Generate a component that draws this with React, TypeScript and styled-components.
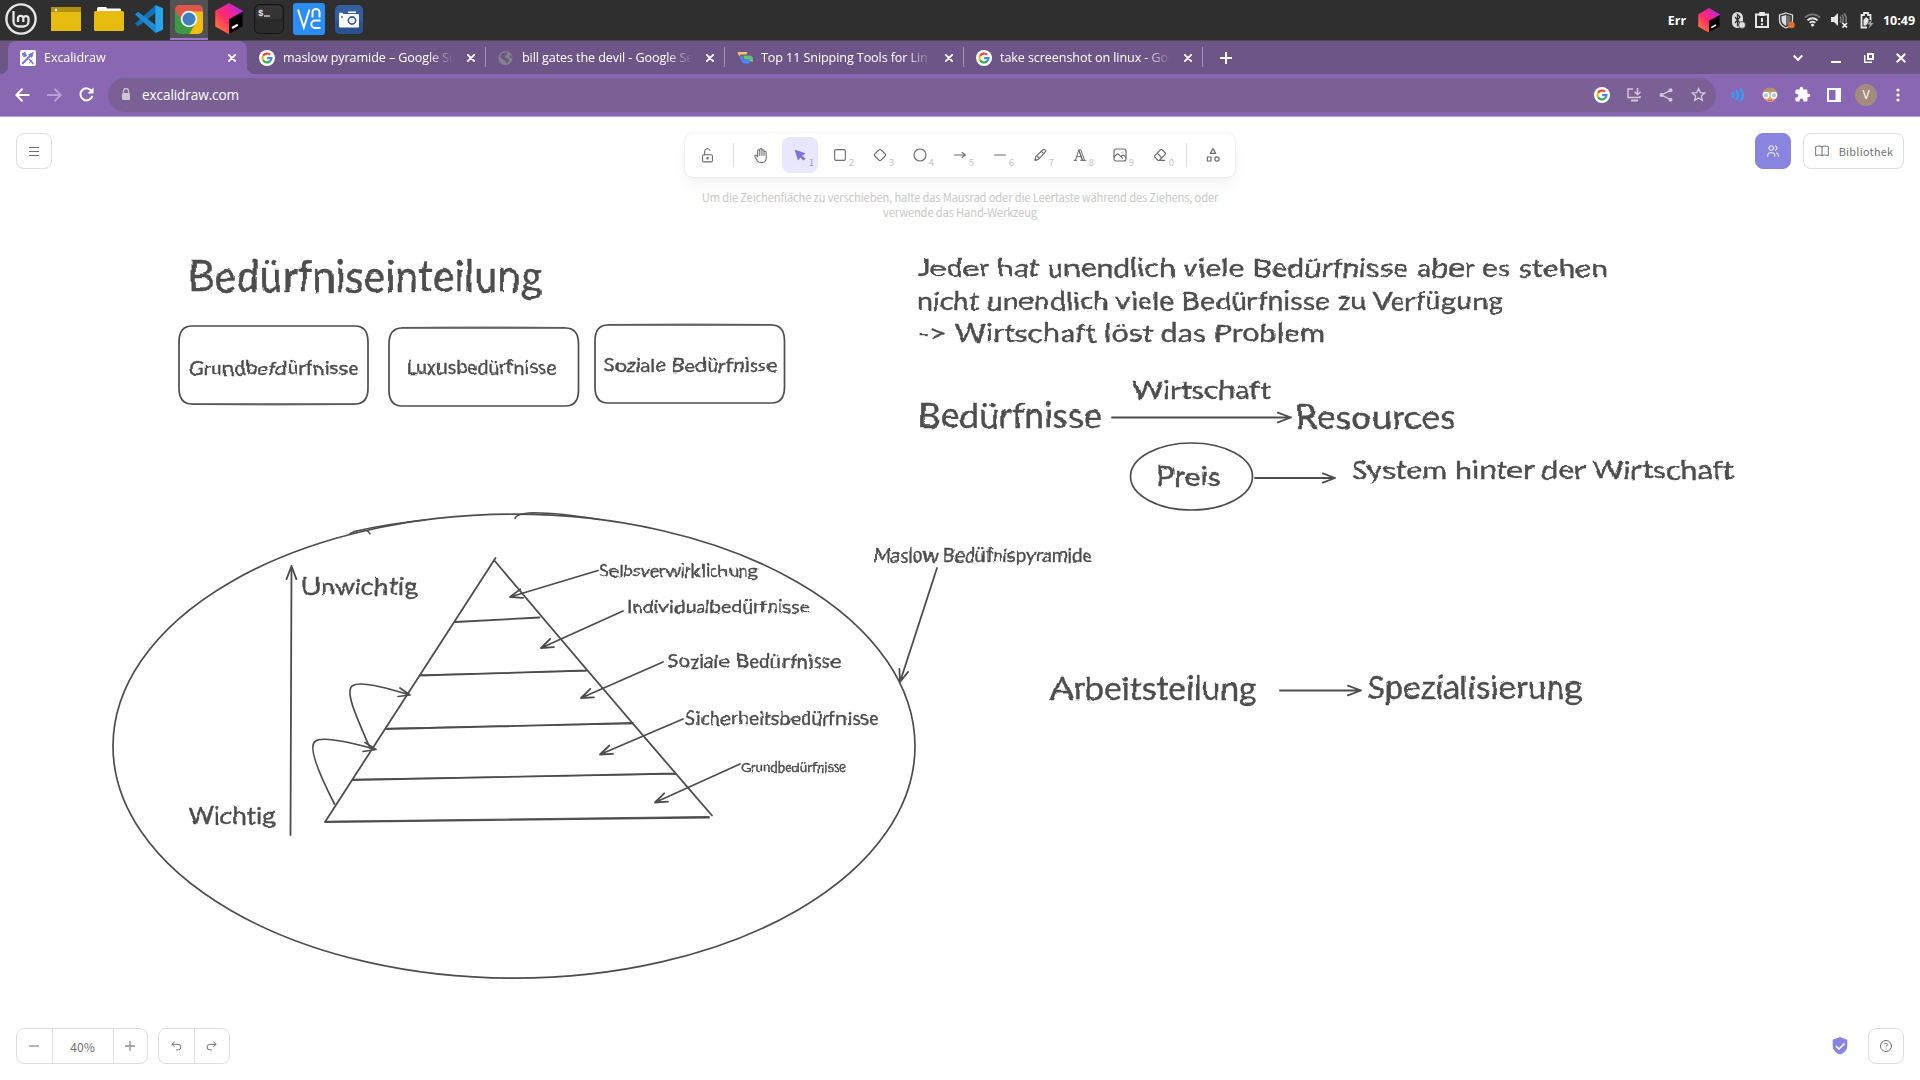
import React from 'react';
import styled, { createGlobalStyle, css } from 'styled-components';

const GlobalStyle = createGlobalStyle`
  * { box-sizing: border-box; }
  body { margin: 0; background: #fff; }
`;

const chromeFont = `"Open Sans", "Noto Sans", sans-serif`;
const uiFont = `"Noto Sans CJK SC", "Open Sans", sans-serif`;

const Screen = styled.div`
  width: 1920px;
  height: 1080px;
  display: flex;
  flex-direction: column;
  overflow: hidden;
  font-family: ${uiFont};
`;

/* ---------- desktop panel ---------- */
const Panel = styled.header`
  height: 41px;
  flex: none;
  display: flex;
  justify-content: space-between;
  background: #2f2f2f;
  border-bottom: 1px solid #4b4a4c;
`;
const Launchers = styled.div`
  display: flex;
`;
const Launcher = styled.div<{ $w?: number }>`
  width: ${(p) => p.$w ?? 40}px;
  display: flex;
  align-items: center;
  justify-content: center;
  padding-bottom: 2px;
`;
const ActiveLauncher = styled(Launcher)`
  width: 38px;
  margin: 0 1px;
  background: #525252;
  border-bottom: 2px solid #9a76cf;
  padding-bottom: 0;
`;
const Tray = styled.div`
  display: flex;
  align-items: center;
  padding-right: 3px;
  color: #fff;
  font: 700 12.5px ${chromeFont};
`;
const TrayItem = styled.div<{ $w: number }>`
  width: ${(p) => p.$w}px;
  height: 40px;
  display: flex;
  align-items: center;
  justify-content: center;
  white-space: nowrap;
`;

/* ---------- browser ---------- */
const TabStrip = styled.div`
  height: 33px;
  flex: none;
  display: flex;
  justify-content: space-between;
  background: #6d5687;
  padding-left: 8px;
`;
const Tabs = styled.div`
  display: flex;
  align-items: center;
`;
const Tab = styled.div<{ $active?: boolean; $divider?: boolean }>`
  position: relative;
  width: 239px;
  height: 33px;
  display: flex;
  align-items: center;
  gap: 8px;
  padding: 0 11px 0 12px;
  color: #fff;
  font: 400 12.6px ${chromeFont};
  ${(p) =>
    p.$active &&
    css`
      background: #8a67b3;
      border-radius: 8px 8px 0 0;
      &::before, &::after {
        content: '';
        position: absolute;
        bottom: 0;
        width: 8px;
        height: 8px;
      }
      &::before { left: -8px; background: radial-gradient(circle at 0 0, #6d5687 8px, #8a67b3 8.5px); }
      &::after { right: -8px; background: radial-gradient(circle at 100% 0, #6d5687 8px, #8a67b3 8.5px); }
    `}
  ${(p) =>
    p.$divider &&
    css`
      &::after {
        content: '';
        position: absolute;
        right: 0;
        top: 6px;
        width: 1px;
        height: 20px;
        background: #a392b4;
      }
    `}
`;
const TabTitle = styled.span`
  flex: 1;
  overflow: hidden;
  white-space: nowrap;
  letter-spacing: -0.1px;
  mask-image: linear-gradient(90deg, #000 82%, transparent 97%);
`;
const Svg = styled.svg`
  display: block;
  flex: none;
`;
const NewTab = styled.div`
  width: 46px;
  display: flex;
  justify-content: center;
`;
const WindowButtons = styled.div`
  display: flex;
  align-items: center;
  padding-right: 1px;
`;
const Slot = styled.div<{ $w?: number }>`
  width: ${(p) => p.$w ?? 32}px;
  display: flex;
  align-items: center;
  justify-content: center;
`;
const AddressRow = styled.div`
  height: 43px;
  flex: none;
  display: flex;
  align-items: center;
  padding: 0 6px 1px;
  background: #8a67b3;
  border-bottom: 1px solid #b7a1d0;
`;
const AddressBar = styled.div`
  width: 1608px;
  height: 34px;
  margin: 0 6px;
  border-radius: 17px;
  background: #7b6096;
  display: flex;
  align-items: center;
  padding: 0 2px 0 13px;
`;
const Url = styled.span`
  flex: 1;
  margin-left: 11px;
  color: #fff;
  font: 400 13.6px ${chromeFont};
  letter-spacing: -0.1px;
`;
const Profile = styled.div`
  width: 22px;
  height: 22px;
  border-radius: 50%;
  background: #a58a7f;
  color: #fff;
  display: flex;
  align-items: center;
  justify-content: center;
  font: 400 12px ${chromeFont};
`;

/* ---------- whiteboard ---------- */
const Board = styled.main`
  flex: 1;
  position: relative;
  display: flex;
  flex-direction: column;
  justify-content: space-between;
  padding: 16px;
  background: #fff;
`;
const Canvas = styled.svg`
  position: absolute;
  left: 0;
  top: 0;
`;
const Bar = styled.div`
  position: relative;
  display: flex;
  justify-content: space-between;
  align-items: flex-start;
`;
const BarSide = styled.div<{ $end?: boolean }>`
  width: 420px;
  display: flex;
  align-items: center;
  gap: ${(p) => (p.$end ? 12 : 10)}px;
  justify-content: ${(p) => (p.$end ? 'flex-end' : 'flex-start')};
`;
const IconButton = styled.button<{ $primary?: boolean }>`
  width: 36px;
  height: 36px;
  padding: 0;
  display: flex;
  align-items: center;
  justify-content: center;
  border-radius: 8px;
  border: 1px solid ${(p) => (p.$primary ? '#8884e0' : '#dedede')};
  background: ${(p) => (p.$primary ? '#8884e0' : '#fff')};
  color: ${(p) => (p.$primary ? '#fff' : '#707070')};
`;
const LibraryButton = styled(IconButton)`
  width: 101px;
  gap: 9px;
  font: 400 10.8px ${uiFont};
  letter-spacing: 0.3px;
`;
const Center = styled.div`
  display: flex;
  flex-direction: column;
  align-items: center;
`;
const Tools = styled.div`
  height: 44px;
  display: flex;
  align-items: center;
  gap: 4px;
  padding: 4px;
  border-radius: 8px;
  background: #fff;
  box-shadow: 0 0 2px rgba(0, 0, 0, 0.14), 0 7px 14px rgba(0, 0, 0, 0.05);
`;
const Tool = styled.button<{ $on?: boolean }>`
  position: relative;
  width: 36px;
  height: 36px;
  padding: 0;
  border: 0;
  border-radius: 8px;
  display: flex;
  align-items: center;
  justify-content: center;
  background: ${(p) => (p.$on ? '#e9e7fd' : 'transparent')};
  color: ${(p) => (p.$on ? '#7a74dc' : '#6b6b6b')};
`;
const Key = styled.span<{ $on?: boolean }>`
  position: absolute;
  right: 4px;
  bottom: 4px;
  font: 400 9.5px/13px ${uiFont};
  color: ${(p) => (p.$on ? '#9f9cc4' : '#c4c4c4')};
`;
const ToolDivider = styled.div`
  width: 1px;
  height: 24px;
  margin: 0 4px;
  background: #dcdcdc;
`;
const Hint = styled.p`
  width: 530px;
  margin: 13px 0 0;
  text-align: center;
  font: 400 11.2px/15px ${uiFont};
  letter-spacing: -0.16px;
  color: #c8c8c8;
`;
const Group = styled.div`
  height: 36px;
  display: flex;
  border: 1px solid #dedede;
  border-radius: 8px;
  background: #fff;
  color: #8a8a8a;
`;
const GroupCell = styled.div<{ $w: number }>`
  width: ${(p) => p.$w}px;
  display: flex;
  align-items: center;
  justify-content: center;
  padding-right: 1px;
  font: 400 12px ${uiFont};
  color: #707070;
  & + & { border-left: 1px solid #dedede; }
`;

const INK = '#4d4d4d';
const Note = styled.text`
  font-family: Lato, "Open Sans", sans-serif;
  font-variant-ligatures: none;
  fill: ${INK};
  stroke: ${INK};
  stroke-width: 0.35;
  white-space: pre;
`;
const Stroke = styled.path<{ $w?: number }>`
  fill: none;
  stroke: ${INK};
  stroke-width: ${(p) => p.$w ?? 1.7};
  stroke-linecap: round;
  stroke-linejoin: round;
`;

type IcoProps = { s?: number; w?: number; children: React.ReactNode; box?: number };
const Line = ({ s = 16, w = 1.7, box = 24, children }: IcoProps) => (
  <Svg width={s} height={s} viewBox={`0 0 ${box} ${box}`} fill="none" stroke="currentColor" strokeWidth={w} strokeLinecap="round" strokeLinejoin="round">
    {children}
  </Svg>
);

const GoogleG = () => (
  <Svg width="16" height="16" viewBox="0 0 48 48">
    <circle cx="24" cy="24" r="24" fill="#fff" />
    <g fill="none" strokeWidth="6.5">
      <path d="M33.5 14.5A13.5 13.5 0 0 0 12.3 17.3" stroke="#ea4335" />
      <path d="M12.3 17.3A13.5 13.5 0 0 0 12.3 30.7" stroke="#fbbc05" />
      <path d="M12.3 30.7A13.5 13.5 0 0 0 32.7 34.3" stroke="#34a853" />
      <path d="M32.7 34.3A13.5 13.5 0 0 0 37.4 24.6H24.5" stroke="#4285f4" />
    </g>
  </Svg>
);
const ExcalidrawIcon = () => (
  <Svg width="16" height="16" viewBox="0 0 16 16">
    <rect width="16" height="16" rx="2" fill="#fff" />
    <g stroke="#7974dd" fill="none" strokeLinecap="round" strokeLinejoin="round">
      <path d="M2.8 13.3 10 6" strokeWidth="2" />
      <path d="M9 4.500 13.300 2.500 11.800 7Z" strokeWidth="1" fill="#7974dd" />
      <path d="M2.500 3.500 5 2.500 6.500 6 4 6.500Z" strokeWidth="1" fill="#7974dd" />
      <path d="M9.500 9.500l3.500 4" strokeWidth="1.600" />
      <path d="M9.500 12.500l2.600-2.300" strokeWidth="1" />
    </g>
  </Svg>
);
const GlobeIcon = () => (
  <Svg width="16" height="16" viewBox="0 0 16 16">
    <circle cx="7.400" cy="8" r="7" fill="#84828a" />
    <path d="M4 3.200 8.600 2l.8 2.500-2.800 1.300L7.800 8 10 8.400l1.200 2.600-2.600 2.800-1-2.800L3 8.200 2 6zM11.200 5l2.400 1.200v2.600l-2-1.200z" fill="#6d5687" />
  </Svg>
);
const GeekIcon = () => (
  <Svg width="16" height="16" viewBox="0 0 16 16">
    <path d="M.3 2.500Q1 2 2 2H10.500L9.500 4.500H4.500Q3 4.500 2.500 6.500Z" fill="#fdbc6e" />
    <path d="M2.500 7.500 5.500 5Q5.500 9.500 8 10H13L12 13.500H7.500Q5 13.500 4 10Z" fill="#4f86f7" />
    <path d="M6.500 5.500H12Q16 5.500 16 9V12L12.800 11.500 12.500 9.500H8Q6 8.500 6.500 5.500Z" fill="#5dc27c" />
  </Svg>
);
const CloseIcon = () => (
  <Line s={8} w={2.2} box={10}>
    <path d="M1 1l8 8M9 1L1 9" />
  </Line>
);

const JetBrains = ({ s }: { s: number }) => (
  <Svg width={s} height={s * 1.12} viewBox="0 0 28 32">
    <defs>
      <linearGradient id="jb" x1="0" y1="1" x2="1" y2="0">
        <stop offset="0" stopColor="#ff9a1f" />
        <stop offset=".42" stopColor="#ff2d6c" />
        <stop offset=".65" stopColor="#e8259c" />
        <stop offset="1" stopColor="#9a2dff" />
      </linearGradient>
    </defs>
    <path d="M14 0 28 8v16l-14 8L0 24V8Z" fill="url(#jb)" />
    <path d="M14 16.500 28 9v15l-14 8Z" fill="#000" />
    <path d="M17 25.500l6-3.300" stroke="#fff" strokeWidth="2.200" />
  </Svg>
);

const Launch = () => (
  <Launchers>
    <Launcher $w={42}>
      <Svg width="34" height="34" viewBox="0 0 34 34" fill="none" stroke="#e6e6e6">
        <circle cx="17" cy="17" r="14.600" strokeWidth="2.400" />
        <path d="M9.500 9v10.500a5 5 0 0 0 5 5h5a5 5 0 0 0 5-5V16a2.700 2.700 0 0 0-5.200 0v4m0-4a2.700 2.700 0 0 0-5.300 0v4" strokeWidth="2.300" />
      </Svg>
    </Launcher>
    <Launcher $w={48}>
      <Svg width="30" height="24" viewBox="0 0 30 24">
        <rect width="30" height="24" fill="#e7bc10" />
        <rect width="30" height="5" fill="#b39010" />
        <circle cx="5" cy="3" r="1.200" fill="#fff" />
      </Svg>
    </Launcher>
    <Launcher $w={38}>
      <Svg width="30" height="24" viewBox="0 0 30 24">
        <path d="M3 1.500 4 0h8l1.500 1.500H26a1 1 0 0 1 1 1V6H3Z" fill="#fff" />
        <rect y="4" width="30" height="20" rx="1.500" fill="#e7bc10" />
      </Svg>
    </Launcher>
    <Launcher $w={41}>
      <Svg width="28" height="28" viewBox="0 0 28 28">
        <path d="M20.500 0v8L3 21.500 0 18.800 20 .5Z" fill="#1272b8" />
        <path d="M3 6.800 20.500 20v8L0 9.500Z" fill="#1c8ad6" />
        <path d="M20.300 0 28 3.300v21.400L20.300 28Z" fill="#27a4ef" />
      </Svg>
    </Launcher>
    <ActiveLauncher>
      <Svg width="28" height="29" viewBox="0 0 28 29">
        <clipPath id="cr"><rect width="28" height="29" rx="5" /></clipPath>
        <g clipPath="url(#cr)">
          <rect width="28" height="29" fill="#3f9a47" />
          <path d="M0 0h28v8H14L7 16 0 5Z" fill="#e2554a" />
          <path d="M14 6.500h14V29H14.500L21 17Z" fill="#f2bd13" />
          <circle cx="14" cy="14" r="8.300" fill="#f4f4f4" />
          <circle cx="14" cy="14" r="6.500" fill="#3f7fbd" />
        </g>
      </Svg>
    </ActiveLauncher>
    <Launcher><JetBrains s={28} /></Launcher>
    <Launcher>
      <Svg width="30" height="30" viewBox="0 0 30 30">
        <rect x=".5" y=".5" width="29" height="29" rx="5" fill="#2a2a2a" stroke="#151515" />
        <rect x="2" y="2" width="26" height="13" rx="4" fill="#353535" />
        <text x="4" y="12" fontSize="9" fontWeight="700" fontFamily="Liberation Mono, monospace" fill="#e8e8e8">$</text>
        <path d="M10 12h6" stroke="#e8e8e8" strokeWidth="1.200" />
      </Svg>
    </Launcher>
    <Launcher>
      <Svg width="32" height="32" viewBox="0 0 32 32" fill="none" stroke="#fff" strokeWidth="2">
        <rect width="32" height="32" rx="3" fill="#2a8cf4" stroke="none" />
        <path d="M5 6.500 10.800 24.500 16.500 6.500" />
        <path d="M19.500 14.500V9.500a3.500 3.500 0 0 1 7 0v5" />
        <path d="M27.500 17.500H22a3.700 3.700 0 0 0 0 7.400h5.500" />
      </Svg>
    </Launcher>
    <Launcher>
      <Svg width="28" height="29" viewBox="0 0 28 29">
        <rect width="28" height="29" rx="5" fill="#345f9e" />
        <rect y="15" width="28" height="14" rx="5" fill="#2b528d" />
        <path d="M4 8.500h4M13 7.300h8" stroke="#fff" strokeWidth="1.400" />
        <rect x="4" y="9" width="20" height="13.500" rx="1.200" fill="#fff" />
        <circle cx="17" cy="15.500" r="3.600" fill="none" stroke="#30599a" strokeWidth="1.600" />
        <circle cx="7" cy="12" r=".9" fill="#30599a" />
      </Svg>
    </Launcher>
  </Launchers>
);

const SystemTray = () => (
  <Tray>
    <TrayItem $w={26}>Err</TrayItem>
    <TrayItem $w={38}><JetBrains s={22} /></TrayItem>
    <TrayItem $w={20}>
      <Svg width="16" height="17" viewBox="0 0 16 17">
        <rect x="2" y="0" width="11" height="16" rx="5.500" fill="#dedede" />
        <path d="M5 5l5 6-2.500 2.500v-11L10 5l-5 6" fill="none" stroke="#2f2f2f" strokeWidth="1.200" />
        <circle cx="12" cy="13" r="3.500" fill="#dedede" stroke="#2f2f2f" strokeWidth=".7" />
      </Svg>
    </TrayItem>
    <TrayItem $w={27}>
      <Svg width="16" height="16" viewBox="0 0 16 16">
        <rect x="2" y="2.500" width="12" height="12.500" fill="none" stroke="#e6e6e6" strokeWidth="2" />
        <rect x="5" y="0" width="6" height="4" rx="1" fill="#e6e6e6" />
        <path d="M8 6v4M8 11.300v2" stroke="#e6e6e6" strokeWidth="2" />
      </Svg>
    </TrayItem>
    <TrayItem $w={23}>
      <Svg width="17" height="17" viewBox="0 0 17 17">
        <path d="M8 1 14.500 3v5c0 3.500-3 6.500-6.500 8C4.500 14.500 1.500 11.500 1.500 8V3Z" fill="none" stroke="#dcdcdc" strokeWidth="1.300" />
        <path d="M8 3v11C5.500 12.500 3.500 10.500 3.500 8V4.200Z" fill="#dcdcdc" />
        <path d="M8 3v11c2.500-1.500 4.500-3.500 4.500-6V4.200Z" fill="#6f6f6f" />
        <circle cx="13.500" cy="13" r="3.300" fill="#e0702f" />
      </Svg>
    </TrayItem>
    <TrayItem $w={29}>
      <Svg width="17" height="14" viewBox="0 0 17 14" fill="none" strokeWidth="1.900">
        <path d="M1 4.500a10.500 10.500 0 0 1 15 0" stroke="#777" />
        <path d="M3.500 7.300a7 7 0 0 1 10 0M5.800 9.800a3.800 3.800 0 0 1 5.400 0" stroke="#e6e6e6" />
        <circle cx="8.500" cy="12" r="1.600" fill="#e6e6e6" />
      </Svg>
    </TrayItem>
    <TrayItem $w={25}>
      <Svg width="17" height="16" viewBox="0 0 17 16" fill="none">
        <path d="M0 5h3l4-4v13l-4-4H0Z" fill="#e6e6e6" />
        <path d="M8.800 4.500a4 4 0 0 1 0 6M10.800 2.800a6.500 6.500 0 0 1 0 8.500M13 1.300a9 9 0 0 1 1.500 9" stroke="#858585" strokeWidth="1.400" />
        <path d="M11.500 11l4.500 4.500m0-4.500-4.500 4.500" stroke="#fff" strokeWidth="1.600" />
      </Svg>
    </TrayItem>
    <TrayItem $w={29}>
      <Svg width="16" height="17" viewBox="0 0 16 17">
        <path d="M8 15.500H2.500V3H5V1h4v2h2.500v5" fill="none" stroke="#e6e6e6" strokeWidth="1.800" />
        <path d="M4.500 13.500V8L7 5l2.500 2v3L7 13.500Z" fill="#e6e6e6" />
        <path d="M13 7 8.500 12.500H11L9.500 17l5-6H12Z" fill="#a8a8a8" />
      </Svg>
    </TrayItem>
    <TrayItem $w={36}>10:49</TrayItem>
  </Tray>
);

const tabs = [
  { title: 'Excalidraw', icon: <ExcalidrawIcon />, active: true },
  { title: 'maslow pyramide – Google Su', icon: <GoogleG />, divider: true },
  { title: 'bill gates the devil - Google Se', icon: <GlobeIcon />, divider: true },
  { title: 'Top 11 Snipping Tools for Lin', icon: <GeekIcon />, divider: true },
  { title: 'take screenshot on linux - Goo', icon: <GoogleG />, divider: true },
];

const Browser = () => (
  <>
    <TabStrip>
      <Tabs>
        {tabs.map((t) => (
          <Tab key={t.title} $active={t.active} $divider={t.divider}>
            {t.icon}
            <TabTitle>{t.title}</TabTitle>
            <CloseIcon />
          </Tab>
        ))}
        <NewTab>
          <Svg width="12" height="12" viewBox="0 0 12 12"><path d="M6 0v12M0 6h12" stroke="#fff" strokeWidth="2" /></Svg>
        </NewTab>
      </Tabs>
      <WindowButtons>
        <Slot $w={38}><Svg width="10" height="8" viewBox="0 0 10 8"><path d="M.7 1.500 5 5.800 9.300 1.500" fill="none" stroke="#fff" strokeWidth="2" /></Svg></Slot>
        <Slot $w={38}><Svg width="10" height="10" viewBox="0 0 10 10"><path d="M0 9h10" stroke="#fff" strokeWidth="2" /></Svg></Slot>
        <Slot $w={28}>
          <Svg width="10" height="10" viewBox="0 0 10 10" fill="none" stroke="#fff"><path d="M4 1h5v5H4Z" strokeWidth="2" /><path d="M.7 2v7.300H8" strokeWidth="1.400" /></Svg>
        </Slot>
        <Slot $w={36}><Svg width="10" height="10" viewBox="0 0 10 10"><path d="M.7.7l8.600 8.600M9.300.7.7 9.300" stroke="#fff" strokeWidth="2" /></Svg></Slot>
      </WindowButtons>
    </TabStrip>
    <AddressRow>
      <Slot><Svg width="15" height="14" viewBox="0 0 15 14"><path d="M14.500 7H1.500M7.500.8 1.300 7l6.200 6.200" fill="none" stroke="#fff" strokeWidth="2" /></Svg></Slot>
      <Slot><Svg width="15" height="14" viewBox="0 0 15 14"><path d="M0 7h13.500M7.500.8 13.700 7l-6.200 6.200" fill="none" stroke="#b79fd1" strokeWidth="2" /></Svg></Slot>
      <Slot><Svg width="15" height="15" viewBox="0 0 15 15"><path d="M12.500 4A6 6 0 1 0 13.300 9" fill="none" stroke="#fff" strokeWidth="2" /><path d="M14.500.5v6h-6Z" fill="#fff" /></Svg></Slot>
      <AddressBar>
        <Svg width="10" height="13" viewBox="0 0 10 13"><rect x="1" y="5" width="8" height="7" rx="1" fill="#c9c9cd" /><path d="M2.500 5V3a2.500 2.500 0 0 1 5 0v2" fill="none" stroke="#c9c9cd" strokeWidth="1.300" /></Svg>
        <Url>excalidraw.com</Url>
        <Slot><GoogleG /></Slot>
        <Slot><Svg width="15" height="14" viewBox="0 0 15 14" fill="none" stroke="#cfc7d6" strokeWidth="1.500"><path d="M6 1H1v8.500h12V8" /><path d="M4 12.500h7" strokeWidth="2" /><path d="M10.500 0v6M7.500 3.800l3 3 3-3" /></Svg></Slot>
        <Slot><Svg width="14" height="14" viewBox="0 0 14 14"><path d="M11.500 2.300 2.500 7l9 4.700" fill="none" stroke="#cfc7d6" strokeWidth="1.400" /><g fill="#cfc7d6"><circle cx="11.500" cy="2.300" r="2" /><circle cx="2.500" cy="7" r="2" /><circle cx="11.500" cy="11.700" r="2" /></g></Svg></Slot>
        <Slot><Svg width="15" height="15" viewBox="0 0 24 24"><path d="M12 2.500l2.900 6.600 7.100.6-5.400 4.700 1.600 7-6.200-3.700-6.200 3.700 1.600-7L2 9.700l7.100-.6Z" fill="none" stroke="#d6cfdd" strokeWidth="2" /></Svg></Slot>
      </AddressBar>
      <Slot>
        <Svg width="14" height="14" viewBox="0 0 14 14" fill="none" stroke="#2fa0ff" strokeWidth="2.200" strokeLinecap="round">
          <path d="M1.500 5Q3.500 7 1.500 9M5.500 3Q8.500 7 5.500 11M9.700 1.300Q14.500 7 9.700 12.700" />
        </Svg>
      </Slot>
      <Slot>
        <Svg width="16" height="16" viewBox="0 0 16 16">
          <ellipse cx="8" cy="8" rx="6.500" ry="7" fill="#e5a878" />
          <path d="M1 7C1 2 4.500.8 8 .8S15 2 15 7L12 4.800H4Z" fill="#b3916a" />
          <g fill="#9fd0dc" stroke="#fff" strokeWidth="1.300"><circle cx="4" cy="8.300" r="2.800" /><circle cx="12" cy="8.300" r="2.800" /></g>
          <path d="M6 13.300h4" stroke="#c7554d" />
        </Svg>
      </Slot>
      <Slot><Svg width="17" height="17" viewBox="0 0 24 24"><path fill="#fff" d="M20.500 11H19V7a2 2 0 0 0-2-2h-4V3.500a2.500 2.500 0 0 0-5 0V5H4a2 2 0 0 0-2 2v3.800h1.500a2.700 2.700 0 0 1 0 5.400H2V20a2 2 0 0 0 2 2h3.800v-1.500a2.700 2.700 0 0 1 5.400 0V22H17a2 2 0 0 0 2-2v-4h1.500a2.500 2.500 0 0 0 0-5Z" /></Svg></Slot>
      <Slot><Svg width="14" height="14" viewBox="0 0 14 14"><path d="M1 1h12v12H1Z" fill="none" stroke="#fff" strokeWidth="2" /><path d="M8.500 1H13v12H8.500Z" fill="#fff" /></Svg></Slot>
      <Slot><Profile>V</Profile></Slot>
      <Slot><Svg width="4" height="14" viewBox="0 0 4 14" fill="#fff"><circle cx="2" cy="2" r="1.600" /><circle cx="2" cy="7" r="1.600" /><circle cx="2" cy="12" r="1.600" /></Svg></Slot>
    </AddressRow>
  </>
);

/* ---------- drawing data: [text, x, baseline, width, size] ---------- */
const notes: [string, number, number, number, number][] = [
  ['Bedürfniseinteilung', 188, 292, 354, 44],
  ['Grundbefdürfnisse', 188.5, 374.5, 170, 19],
  ['Luxusbedürfnisse', 406.5, 374, 150, 19],
  ['Soziale Bedürfnisse', 603.5, 371.5, 174, 19],
  ['Jeder hat unendlich viele Bedürfnisse aber es stehen', 918, 276.5, 690, 25],
  ['nicht unendlich viele Bedürfnisse zu Verfügung', 917, 309.5, 586, 25],
  ['-> Wirtschaft löst das Problem', 918, 342, 407, 25],
  ['Bedürfnisse', 918, 427.5, 184, 34],
  ['Wirtschaft', 1132, 399, 139, 24.5],
  ['Resources', 1295, 429, 161, 32],
  ['Preis', 1156, 486, 65, 26],
  ['System hinter der Wirtschaft', 1351, 478.5, 383, 25],
  ['Unwichtig', 301.5, 595, 116, 24],
  ['Wichtig', 187.5, 824, 88, 24],
  ['Selbsverwirklichung', 599, 577, 159, 18],
  ['Individualbedürfnisse', 627, 613, 183, 18],
  ['Soziale Bedürfnisse', 667.5, 667.5, 174, 19],
  ['Sicherheitsbedürfnisse', 685.5, 725, 193, 19],
  ['Grundbedürfnisse', 741, 772, 105, 12.5],
  ['Maslow Bedüfnispyramide', 873.5, 562, 219, 18.5],
  ['Arbeitsteilung', 1050.5, 700, 206, 32],
  ['Spezialisierung', 1367, 698.5, 215, 32],
];

const arrows: [number, number, number, number, number][] = [
  [1112, 417.5, 1291, 417.5, 14],
  [1255, 478, 1335, 478, 13],
  [1280, 690.5, 1361, 690.5, 14],
  [290.5, 835, 291.5, 566, 14],
  [598, 570.5, 510, 597, 13],
  [623, 611, 541, 648, 13],
  [663, 662, 581, 698, 13],
  [683, 719, 600, 754.5, 13],
  [740, 764, 655, 802.5, 13],
  [937, 568, 900, 682, 13],
];
const arrowPath = ([x1, y1, x2, y2, h]: (typeof arrows)[number]) => {
  const a = Math.atan2(y2 - y1, x2 - x1);
  const wing = (d: number) => `M${x2 - h * Math.cos(a + d)},${y2 - h * Math.sin(a + d)}L${x2},${y2}`;
  return `M${x1},${y1}L${x2},${y2}${wing(0.36)}${wing(-0.36)}`;
};

const roundBox = (x: number, y: number, w: number, h: number) =>
  `M${x + 13},${y}H${x + w - 13}Q${x + w},${y} ${x + w},${y + 16}V${y + h - 16}Q${x + w},${y + h} ${x + w - 13},${y + h}H${x + 13}Q${x},${y + h} ${x},${y + h - 16}V${y + 16}Q${x},${y} ${x + 13},${y}`;

const Drawing = () => (
  <Canvas width="1920" height="963" viewBox="0 117 1920 963">
    <defs>
      <filter id="hand" x="0" y="117" width="1920" height="963" filterUnits="userSpaceOnUse">
        <feTurbulence type="fractalNoise" baseFrequency="0.07" numOctaves="1" seed="4" result="n" />
        <feDisplacementMap in="SourceGraphic" in2="n" scale="5" xChannelSelector="R" yChannelSelector="G" />
      </filter>
    </defs>
    <Stroke d={roundBox(179, 326, 189, 78)} />
    <Stroke d={roundBox(389, 328, 189.5, 78)} />
    <Stroke d={roundBox(595, 325, 189.5, 78)} />
    <Stroke $w={0.8} d="M192,404.500Q275,405.500 355,404.500M402,327.500Q480,326.500 565,327.500M608,324.500Q690,323.500 772,324.500" />
    <Stroke d="M1130.500,476.500A61,33.500 0 0 1 1252.500,476.500A61,33.500 0 0 1 1130.500,476.500" />
    <Stroke d="M113,746.200A401,232 0 0 1 915,746.200A401,232 0 0 1 113,746.200" />
    <Stroke $w={1.5} d="M350,533.500Q362,529 366,530Q369,531.500 370,534M354,531.500Q390,523.500 425,520M515,518.500Q516,513.500 533,512.700Q560,513 600,519.500" />
    <Stroke $w={1.8} d="M495.500,558L325,822M494,560Q600,686 712,815.500M325,822L709,817.500M455,622L539.500,617.500M420,675.500L586,670.500M386.500,729L633,723M352,780L676,773.500" />
    <Stroke $w={0.9} d="M420,675L586,671M387,728.300L633,723.700M353,779.300L676,774M326,821.300L709,816.500" />
    <Stroke d="M334.500,804C318,772 308,747 315,741.500C320,737 342,740 376,749.500M365,742.500L376,749.500L363,751.500" />
    <Stroke d="M370,748C356,716 344,690 353,685.500C358,682 378,685 410,695M400,688L410,695L398,696.500" />
    {arrows.map((a) => (
      <Stroke key={a.join()} $w={1.8} d={arrowPath(a)} />
    ))}
    <g filter="url(#hand)">
      {notes.map(([text, x, y, w, size]) => (
        <Note key={text + x} x={x} y={y} fontSize={size} textLength={w} lengthAdjust="spacingAndGlyphs">
          {text}
        </Note>
      ))}
    </g>
  </Canvas>
);

const tools: { key: string; on?: boolean; icon: React.ReactNode }[] = [
  { key: '1', on: true, icon: <Svg width="16" height="16" viewBox="0 0 22 22"><path d="M4.500 4.500l4.200 13.500 2.400-4.500 4.700 4.700 2.200-2.200-4.700-4.700L18 9Z" fill="currentColor" stroke="currentColor" strokeWidth="1.200" strokeLinejoin="round" /></Svg> },
  { key: '2', icon: <Line><rect x="4" y="4" width="16" height="16" rx="2" /></Line> },
  { key: '3', icon: <Line><path d="M10.500 4.200 4.200 10.500a2 2 0 0 0 0 3l6.300 6.300a2 2 0 0 0 3 0l6.300-6.300a2 2 0 0 0 0-3L13.500 4.200a2 2 0 0 0-3 0Z" /></Line> },
  { key: '4', icon: <Line><circle cx="12" cy="12" r="9" /></Line> },
  { key: '5', icon: <Line><path d="M4 12h16M15 16l5-4M15 8l5 4" /></Line> },
  { key: '6', icon: <Line><path d="M4 12h16" /></Line> },
  { key: '7', icon: <Line><path d="M5.500 14.500 16 4.500a2.400 2.400 0 0 1 3.500 3.500L9.500 18.500 4.500 20ZM14 6.500l3.500 3.500M7 13l3.500 3.500" /></Line> },
  { key: '8', icon: <Line w={1.5}><path d="M3 20h4M13 20h8M5 20 10.500 4H13l6 16M7.500 14.500H14M11 6l5 14M15.500 20l-5-14.500" /></Line> },
  { key: '9', icon: <Line><rect x="3" y="3" width="18" height="18" rx="3" /><path d="M15 8h.01M3 15l4-4c1-1 2-1 3 0l6 6M14 14l1-1c1-1 2-1 3 0l3 3" /></Line> },
  { key: '0', icon: <Line><path d="M19 20H9l-5-5a1.500 1.500 0 0 1 0-2l9-9a1.500 1.500 0 0 1 2 0l5 5a1.500 1.500 0 0 1 0 2l-8.500 8.500M8 9.500l7 7" /></Line> },
];

const App = () => (
  <Screen>
    <GlobalStyle />
    <Panel>
      <Launch />
      <SystemTray />
    </Panel>
    <Browser />
    <Board>
      <Drawing />
      <Bar>
        <BarSide>
          <IconButton><Svg width="10" height="10" viewBox="0 0 10 10" stroke="currentColor"><path d="M0 1.500h10M0 5.500h10M0 9.500h10" /></Svg></IconButton>
        </BarSide>
        <Center>
          <Tools>
            <Tool><Line s={17} w={1.5}><rect x="5" y="11" width="14" height="10" rx="2" /><path d="M8 11V6a4 4 0 0 1 7.500-1.500" /><circle cx="12" cy="16" r="1" /></Line></Tool>
            <ToolDivider />
            <Tool><Line s={17} w={1.5}><path d="M8 13V5.500a1.500 1.500 0 0 1 3 0V12M11 5.500v-2a1.500 1.500 0 0 1 3 0V12M14 5.500a1.500 1.500 0 0 1 3 0V12M17 7.500a1.500 1.500 0 0 1 3 0V16a6 6 0 0 1-6 6h-2c-2.200 0-3.500-.8-4.700-2.700L4 13.500a1.500 1.500 0 0 1 2.500-1.500L8 14" /></Line></Tool>
            {tools.map((t) => (
              <Tool key={t.key} $on={t.on}>
                {t.icon}
                <Key $on={t.on}>{t.key}</Key>
              </Tool>
            ))}
            <ToolDivider />
            <Tool><Line w={1.8}><path d="M12 2.500 8 9.500h8ZM3.500 15h5.500v6H3.500Z" /><circle cx="18" cy="18" r="3.200" /></Line></Tool>
          </Tools>
          <Hint>Um die Zeichenfläche zu verschieben, halte das Mausrad oder die Leertaste während des Ziehens, oder<br />verwende das Hand-Werkzeug</Hint>
        </Center>
        <BarSide $end>
          <IconButton $primary><Line s={14}><circle cx="9" cy="7" r="4" /><path d="M3 21v-2a4 4 0 0 1 4-4h4a4 4 0 0 1 4 4v2M16 3.200a4 4 0 0 1 0 7.700M21 21v-2a4 4 0 0 0-3-3.800" /></Line></IconButton>
          <LibraryButton><Line w={1.5}><path d="M12 5.500c-2-1.300-6-1.300-9.500 0v13.500c3.500-1.300 7.500-1.300 9.500 0 2-1.300 6-1.300 9.500 0V5.500c-3.500-1.300-7.500-1.300-9.500 0ZM12 5.500V19" /></Line>Bibliothek</LibraryButton>
        </BarSide>
      </Bar>
      <Bar>
        <BarSide>
          <Group>
            <GroupCell $w={35}><Svg width="10" height="10" viewBox="0 0 10 10"><path d="M0 5h10" stroke="#8f8f8f" strokeWidth="1.300" /></Svg></GroupCell>
            <GroupCell $w={61}>40%</GroupCell>
            <GroupCell $w={34}><Svg width="10" height="10" viewBox="0 0 10 10"><path d="M0 5h10M5 0v10" stroke="#8f8f8f" strokeWidth="1.300" /></Svg></GroupCell>
          </Group>
          <Group>
            <GroupCell $w={35}><Line s={13} w={1.5} box={20}><path d="M7 10.500 3 6.700 7 3M3 6.700h9.500a4.200 4.200 0 0 1 0 8.500H10" /></Line></GroupCell>
            <GroupCell $w={35}><Line s={13} w={1.5} box={20}><path d="M13 10.500l4-3.800L13 3M17 6.700H7.500a4.200 4.200 0 0 0 0 8.500H10" /></Line></GroupCell>
          </Group>
        </BarSide>
        <BarSide $end>
          <Slot $w={33}>
            <Svg width="16" height="18" viewBox="0 0 16 18"><path d="M8 0l7.300 2.700V9c0 4-3.300 7-7.300 8.600C4 16 .7 13 .7 9V2.700Z" fill="#8884e0" /><path d="M4 9l3 3 5.500-5.500" fill="none" stroke="#fff" strokeWidth="1.600" /></Svg>
          </Slot>
          <IconButton><Line s={14}><circle cx="12" cy="12" r="9.500" /><path d="M12 17v.01M12 13.500a1.500 1.500 0 0 1 1-1.500 2.600 2.600 0 1 0-3.500-3.500" /></Line></IconButton>
        </BarSide>
      </Bar>
    </Board>
  </Screen>
);

export default App;
